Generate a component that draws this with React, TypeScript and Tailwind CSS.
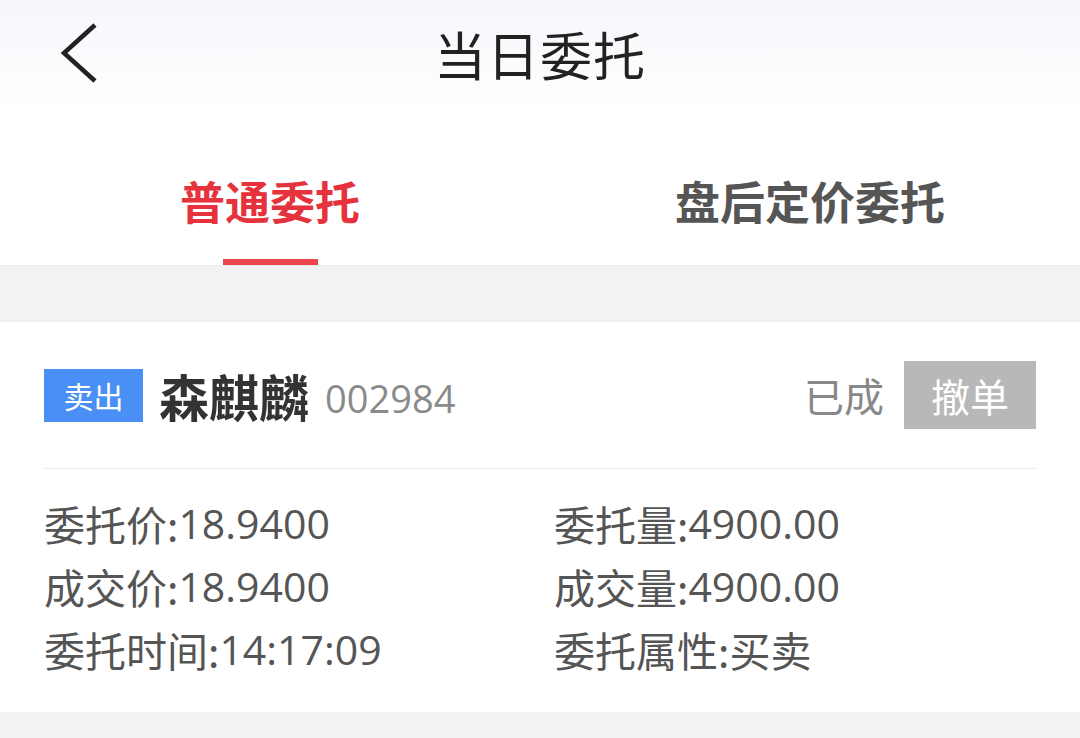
const font = { fontFamily: '"Noto Sans CJK SC", "Noto Sans", sans-serif' };
const num = { fontFamily: '"Open Sans", "Noto Sans CJK SC", sans-serif' };

const rows: [string, string, string, string][] = [
  ["委托价:", "18.9400", "委托量:", "4900.00"],
  ["成交价:", "18.9400", "成交量:", "4900.00"],
  ["委托时间:", "14:17:09", "委托属性:", "买卖"],
];

export default function App() {
  return (
    <div className="w-[1080px] h-[738px] overflow-hidden bg-[#f2f2f2]" style={font}>
      <div className="relative h-[111px] bg-gradient-to-b from-[#f5f7fb] to-white flex items-center justify-center">
        <svg className="absolute left-[58px] top-[22px]" width="44" height="62" viewBox="0 0 44 62">
          <polyline points="37,3 6,31 37,59" fill="none" stroke="#222" strokeWidth="4.5" strokeLinejoin="miter" />
        </svg>
        <h1 className="text-[52px] leading-none text-[#222] tracking-[1px] -mt-[4px]">当日委托</h1>
      </div>

      <div className="h-[155px] bg-white flex border-b border-[#ebebeb]">
        <div className="flex-1 flex flex-col items-center justify-end">
          <span className="text-[45px] leading-none font-bold text-[#e5323c] mb-[36px]">普通委托</span>
          <div className="w-[95px] h-[6px] bg-[#e8454c]" />
        </div>
        <div className="flex-1 flex flex-col items-center justify-end">
          <span className="text-[45px] leading-none font-bold text-[#555] mb-[42px]">盘后定价委托</span>
        </div>
      </div>

      <div className="h-[56px]" />

      <div className="bg-white h-[390px] px-[44px]">
        <div className="h-[147px] flex items-center border-b border-[#ececec]">
          <span className="w-[99px] h-[53px] bg-[#4a8ff5] text-white text-[30px] leading-none flex items-center justify-center">卖出</span>
          <span className="ml-[16px] text-[50px] leading-none font-bold text-[#333]">森麒麟</span>
          <span className="ml-[16px] text-[38px] leading-none text-[#8a8a8a] mt-[6px]" style={num}>002984</span>
          <span className="ml-auto text-[40px] leading-none text-[#888]">已成</span>
          <span className="ml-[20px] w-[132px] h-[68px] bg-[#b8b8b8] text-white text-[39px] leading-none flex items-center justify-center">撤单</span>
        </div>
        <div className="pt-[23px] flex flex-col">
          {rows.map(([a, b, c, d]) => (
            <div key={a} className="flex h-[63px] items-center text-[41px] leading-none text-[#555]">
              <span className="w-[510px] flex items-center">
                {a}
                <span style={num}>{b}</span>
              </span>
              <span className="flex items-center">
                {c}
                <span style={d === "买卖" ? font : num}>{d}</span>
              </span>
            </div>
          ))}
        </div>
      </div>
    </div>
  );
}
